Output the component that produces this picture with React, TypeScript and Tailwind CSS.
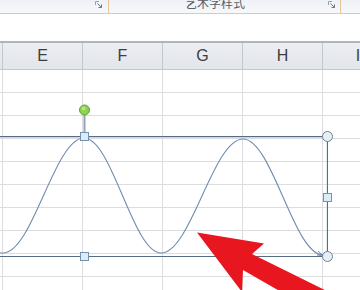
import React from 'react';

const columns = ['E', 'F', 'G', 'H'];
const rows = Array.from({ length: 10 }, (_, i) => i);

function Launcher() {
  return (
    <svg width="8" height="7" viewBox="0 0 8 7" className="block">
      <path d="M0.5 0.5 H4 M0.5 0.5 V4" stroke="#9aa0a8" strokeWidth="1" fill="none" />
      <path d="M2.5 2.5 L6.5 6.5 M6.5 3.5 V6.5 H3.5" stroke="#6f7781" strokeWidth="1" fill="none" />
    </svg>
  );
}

function Ribbon() {
  return (
    <div className="flex h-[14px] border-b border-[#e4c89e] bg-gradient-to-b from-[#eef1f5] to-[#f7f8fa]">
      <div className="flex w-[109px] shrink-0 justify-end border-r border-[#e6c493] pr-[5px] pt-[1px]">
        <Launcher />
      </div>
      <div className="flex w-[232px] shrink-0 items-start justify-between border-r border-[#e6c493] pl-[76px] pr-[4px]">
        <span className="-mt-[5px] text-[12px] leading-[16px] text-[#5a5f66] font-['Noto_Sans_CJK_SC',sans-serif]">
          艺术字样式
        </span>
        <div className="pt-[1px]">
          <Launcher />
        </div>
      </div>
      <div className="flex-1" />
    </div>
  );
}

function Sheet() {
  return (
    <div>
      <div className="flex h-[27px] border-b border-[#c3c7cd] bg-gradient-to-b from-[#eceef2] to-[#e2e5ea] text-[16px] text-[#3d3d3d]">
        <div className="w-[3px] shrink-0 border-r border-[#c3c7cd]" />
        {columns.map((c) => (
          <div key={c} className="flex w-[80px] shrink-0 items-center justify-center border-r border-[#c3c7cd]">
            {c}
          </div>
        ))}
        <div className="flex w-[70px] shrink-0 items-center justify-center">I</div>
      </div>
      {rows.map((r) => (
        <div key={r} className="flex h-[23px] border-b border-[#dcdde0]">
          <div className="w-[3px] shrink-0 border-r border-[#dcdde0]" />
          {columns.map((c) => (
            <div key={c} className="w-[80px] shrink-0 border-r border-[#dcdde0]" />
          ))}
          <div className="flex-1" />
        </div>
      ))}
    </div>
  );
}

function WaveShape() {
  const a = 0.364;
  const pts = [
    [3, 253],
    [84, 138],
    [161, 253],
    [243, 139],
    [323, 255],
  ];
  let d = `M0 253 L${pts[0][0]} ${pts[0][1]}`;
  for (let i = 1; i < pts.length; i++) {
    const [x0, y0] = pts[i - 1];
    const [x1, y1] = pts[i];
    const h = x1 - x0;
    d += ` C${x0 + h * a} ${y0} ${x1 - h * a} ${y1} ${x1} ${y1}`;
  }
  return (
    <svg className="absolute left-0 top-0" width="360" height="290" viewBox="0 0 360 290">
      {/* selection frame */}
      <path d="M0 137.5 H327 V256.5 H0" stroke="#c9dcea" strokeWidth="1" fill="none" />
      <path d="M0 136.5 H327.5 V256.5 H0" stroke="#566c84" strokeWidth="1" fill="none" />
      {/* wave */}
      <path d={d} stroke="#6f8cb0" strokeWidth="1.1" fill="none" />
      <path d="M318 251 L323 255.5 L317 255" stroke="#6f8cb0" strokeWidth="1" fill="none" />
      {/* rotate handle */}
      <line x1="84.5" y1="115" x2="84.5" y2="133" stroke="#8fa4b8" strokeWidth="2" />
      <circle cx="84.5" cy="110" r="5" fill="#8fd14c" stroke="#5f9b36" strokeWidth="1" />
      <circle cx="83.5" cy="108.5" r="2" fill="#c4eda0" opacity="0.7" />
      {/* size handles */}
      <rect x="80.5" y="132.5" width="8" height="8" fill="#dcecf6" stroke="#7592ad" />
      <rect x="80.5" y="252.5" width="8" height="8" fill="#dcecf6" stroke="#7592ad" />
      <rect x="323.5" y="193.5" width="8" height="8" fill="#dcecf6" stroke="#7592ad" />
      <circle cx="327.5" cy="136.5" r="5" fill="#e8eff3" stroke="#6e8397" />
      <circle cx="327.5" cy="256.5" r="5" fill="#e8eff3" stroke="#6e8397" />
      {/* red arrow */}
      <polygon
        points="197,232.5 264,243.5 252,254 345,300 330,320 243,270 242,292"
        fill="#e8161f"
      />
    </svg>
  );
}

export default function App() {
  return (
    <div className="relative h-[290px] w-[360px] overflow-hidden bg-white font-['Liberation_Sans',sans-serif]">
      <Ribbon />
      <div className="h-[27px]" />
      <div className="h-[2px] bg-[#b1b4b9]" />
      <Sheet />
      <WaveShape />
    </div>
  );
}
